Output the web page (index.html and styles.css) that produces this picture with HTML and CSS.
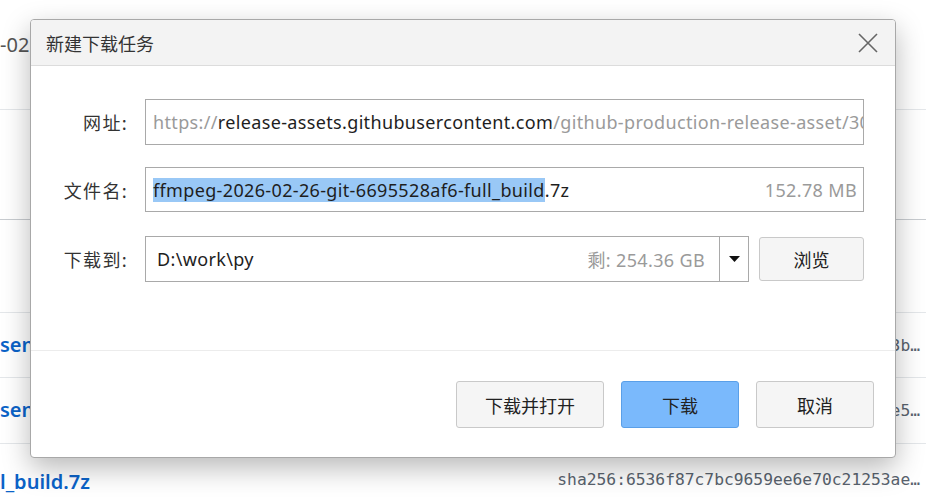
FILE: index.html
```html
<!DOCTYPE html>
<html lang="zh-CN">
<head>
<meta charset="utf-8">
<title>新建下载任务</title>
<link rel="stylesheet" href="styles.css">
</head>
<body>
<div class="page">
  <div class="row r0"><span class="lt dark">-02</span></div>
  <div class="row r1"></div>
  <div class="row r2"></div>
  <div class="row r3"><span class="lt link">sent</span><span class="rt mono">3b…</span></div>
  <div class="row r4"><span class="lt link">sent</span><span class="rt mono">e5…</span></div>
  <div class="row r5"><span class="lt link">l_build.7z</span><span class="rt mono">sha256:6536f87c7bc9659ee6e70c21253ae…</span></div>
</div>

<div class="dialog">
  <div class="titlebar">
    <span class="title">新建下载任务</span>
    <svg class="close" width="20" height="20" viewBox="0 0 20 20"><path d="M1 1L19 19M19 1L1 19" stroke="#666" stroke-width="1.6" fill="none"/></svg>
  </div>
  <div class="form">
    <label class="lbl">网址:</label>
    <div class="field"><span class="gray">https://</span><span>release-assets.githubusercontent.com</span><span class="gray">/github-production-release-asset/30</span></div>

    <label class="lbl">文件名:</label>
    <div class="field split f2"><span class="fname"><span class="sel">ffmpeg-2026-02-26-git-6695528af6-full_build</span>.7z</span><span class="gray">152.78 MB</span></div>

    <label class="lbl third">下载到:</label>
    <div class="pathrow third">
      <div class="field split path"><span>D:\work\py</span><span class="gray">剩: 254.36 GB</span></div>
      <div class="drop"><svg width="11" height="6" viewBox="0 0 11 6"><path d="M0 0H11L5.5 6Z" fill="#111"/></svg></div>
      <button class="btn browse">浏览</button>
    </div>
  </div>
  <div class="footer">
    <button class="btn wide">下载并打开</button>
    <button class="btn primary">下载</button>
    <button class="btn">取消</button>
  </div>
</div>
</body>
</html>
```

FILE: styles.css
```css
html, body {
  margin: 0;
  padding: 0;
  background: #ffffff;
  overflow: hidden;
}
body {
  width: 926px;
  height: 501px;
  position: relative;
  font-family: "Noto Sans", "Noto Sans CJK SC", sans-serif;
}
.page {
  display: flex;
  flex-direction: column;
}
.row {
  display: flex;
  justify-content: space-between;
  align-items: center;
  border-bottom: 1px solid #e4e7ea;
  padding: 0 6px 0 0;
  box-sizing: border-box;
}
.r0 { height: 110px; align-items: flex-start; padding-top: 31px; }
.r1 { height: 110px; border-bottom-color: #c8ccd0; }
.r2 { height: 93px; }
.r3 { height: 65px; }
.r4 { height: 66px; }
.r5 { height: 66px; border-bottom: none; }
.dark { color: #555; font-size: 20px; }
.link {
  color: #0b63c8;
  font-size: 20px;
  font-weight: 600;
}
.mono {
  font-family: "DejaVu Sans Mono", monospace;
  color: #59636e;
  font-size: 16.3px;
}
.r3 .lt, .r4 .lt { margin-top: -2px; }
.r5 .lt { margin-top: 8px; }
.r5 .rt { margin-top: 4px; }

.dialog {
  position: absolute;
  left: 30px;
  top: 19px;
  width: 866px;
  height: 439px;
  box-sizing: border-box;
  background: #fff;
  border: 1px solid #a8a8a8;
  border-radius: 4px;
  box-shadow: 0 10px 28px rgba(0,0,0,0.28);
  display: flex;
  flex-direction: column;
  overflow: hidden;
}
.titlebar {
  height: 46px;
  flex: none;
  box-sizing: border-box;
  background: #f3f3f3;
  border-bottom: 1px solid #dcdcdc;
  display: flex;
  align-items: center;
  justify-content: space-between;
  padding: 0 17px 0 15px;
}
.title {
  font-family: "Noto Sans CJK SC", sans-serif;
  font-size: 18px;
  color: #333;
}
.form {
  flex: none;
  height: 285px;
  box-sizing: border-box;
  border-bottom: 1px solid #ececec;
  padding: 33px 31px 0 0;
  display: grid;
  grid-template-columns: 97px 1fr;
  grid-template-rows: 46px 45px 46px;
  column-gap: 17px;
  row-gap: 22px;
  align-items: center;
  align-content: start;
}
.third { margin-top: 3px; }
.lbl {
  text-align: right;
  font-family: "Noto Sans CJK SC", sans-serif;
  font-size: 18px;
  letter-spacing: 1.3px;
  color: #333;
}
.field {
  height: 46px;
  box-sizing: border-box;
  border: 1px solid #a9a9a9;
  display: flex;
  align-items: center;
  padding: 0 6px 0 7px;
  font-size: 18px;
  letter-spacing: 0.35px;
  color: #1e1e1e;
  white-space: nowrap;
  overflow: hidden;
}
.f2 { height: 45px; }
.split { justify-content: space-between; }
.gray { color: #9a9a9a; }
.sel { background: #99c8f6; }
.fname { display: flex; align-items: center; }
.pathrow {
  display: flex;
  align-items: center;
  height: 46px;
}
.path { width: 575px; padding: 0 14px 0 11px; }
.drop {
  width: 30px;
  height: 46px;
  box-sizing: border-box;
  margin-left: -1px;
  border: 1px solid #a9a9a9;
  display: flex;
  align-items: center;
  justify-content: center;
}
.btn {
  font-family: "Noto Sans CJK SC", sans-serif;
  font-size: 18px;
  color: #222;
  background: #f5f5f5;
  border: 1px solid #c9c9c9;
  border-radius: 3px;
  height: 47px;
  width: 118px;
  padding: 0;
}
.browse {
  margin-left: 10px;
  width: 105px;
  height: 44px;
}
.footer {
  flex: 1;
  display: flex;
  justify-content: flex-end;
  align-items: flex-start;
  padding: 30px 21px 0 0;
  gap: 17px;
}
.wide { width: 148px; }
.primary {
  background: #7ab9fc;
  border-color: #5a9fe8;
}
```
